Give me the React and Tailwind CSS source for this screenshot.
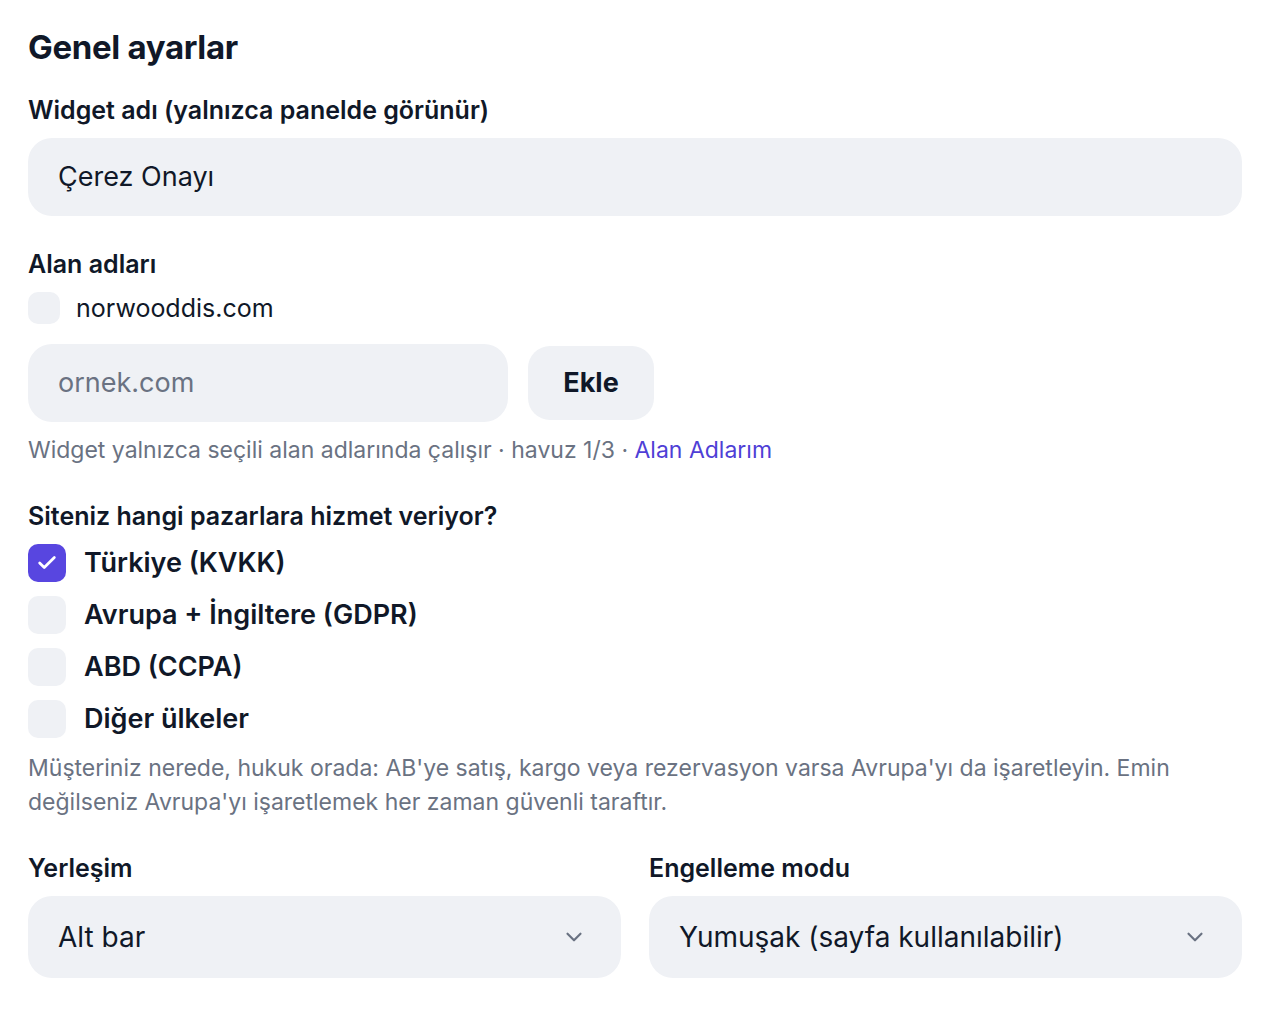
import React, { useState } from "react";
import { Check, ChevronDown } from "lucide-react";

const MARKETS = [
  { id: "tr", label: "Türkiye (KVKK)", checked: true },
  { id: "eu", label: "Avrupa + İngiltere (GDPR)", checked: false },
  { id: "us", label: "ABD (CCPA)", checked: false },
  { id: "other", label: "Diğer ülkeler", checked: false },
];

function Select({ value }) {
  return (
    <div className="flex h-[82px] items-center justify-between rounded-[24px] bg-[#eff1f5] pl-[30px] pr-[34px]">
      <span className="text-[28px] text-gray-900">{value}</span>
      <ChevronDown className="h-[26px] w-[26px] text-gray-500" strokeWidth={2} />
    </div>
  );
}

export default function App() {
  const [markets, setMarkets] = useState(MARKETS);

  const toggle = (id) =>
    setMarkets((m) => m.map((x) => (x.id === id ? { ...x, checked: !x.checked } : x)));

  return (
    <div className="min-h-screen bg-white px-[28px] pt-[26px] text-gray-900" style={{ fontFamily: "Inter, 'Noto Sans', sans-serif" }}>
      <h2 className="text-[33px] font-bold leading-[42px] tracking-[-0.01em]">Genel ayarlar</h2>

      <label className="mt-[26px] block text-[25px] font-semibold leading-[32px]">
        Widget adı (yalnızca panelde görünür)
      </label>
      <div className="mt-[12px] flex h-[78px] items-center rounded-[24px] bg-[#eff1f5] px-[30px]">
        <span className="text-[27px]">Çerez Onayı</span>
      </div>

      <div className="mt-[32px] text-[25px] font-semibold leading-[32px]">Alan adları</div>
      <div className="mt-[12px] flex items-center gap-[16px]">
        <span className="h-[32px] w-[32px] rounded-[10px] bg-[#eff1f5]" />
        <span className="text-[25px] leading-[32px]">norwooddis.com</span>
      </div>

      <div className="mt-[20px] flex items-center gap-[20px]">
        <div className="flex h-[78px] w-[480px] items-center rounded-[24px] bg-[#eff1f5] px-[30px]">
          <span className="text-[27px] text-gray-500">ornek.com</span>
        </div>
        <button className="flex h-[74px] w-[126px] items-center justify-center rounded-[22px] bg-[#eff1f5] text-[27px] font-bold">
          Ekle
        </button>
      </div>

      <p className="mt-[12px] text-[23px] leading-[32px] text-gray-500">
        Widget yalnızca seçili alan adlarında çalışır · havuz 1/3 ·{" "}
        <a className="text-[#4f3fd6]">Alan Adlarım</a>
      </p>

      <div className="mt-[34px] text-[25px] font-semibold leading-[32px]">Siteniz hangi pazarlara hizmet veriyor?</div>
      <div className="mt-[12px] flex flex-col gap-[14px]">
        {markets.map((m) => (
          <button key={m.id} onClick={() => toggle(m.id)} className="flex items-center gap-[18px] text-left">
            <span
              className={`flex h-[38px] w-[38px] items-center justify-center rounded-[10px] ${
                m.checked ? "bg-[#5846e0]" : "bg-[#eff1f5]"
              }`}
            >
              {m.checked && <Check className="h-[22px] w-[22px] text-white" strokeWidth={3} />}
            </span>
            <span className="text-[27px] font-semibold leading-[38px]">{m.label}</span>
          </button>
        ))}
      </div>

      <p className="mt-[13px] text-[23px] leading-[34px] text-gray-500">
        Müşteriniz nerede, hukuk orada: AB'ye satış, kargo veya rezervasyon varsa Avrupa'yı da işaretleyin. Emin
        değilseniz Avrupa'yı işaretlemek her zaman güvenli taraftır.
      </p>

      <div className="mt-[33px] grid grid-cols-2 gap-[28px]">
        <div>
          <div className="text-[25px] font-semibold leading-[32px]">Yerleşim</div>
          <div className="mt-[12px]">
            <Select value="Alt bar" />
          </div>
        </div>
        <div>
          <div className="text-[25px] font-semibold leading-[32px]">Engelleme modu</div>
          <div className="mt-[12px]">
            <Select value="Yumuşak (sayfa kullanılabilir)" />
          </div>
        </div>
      </div>
    </div>
  );
}
